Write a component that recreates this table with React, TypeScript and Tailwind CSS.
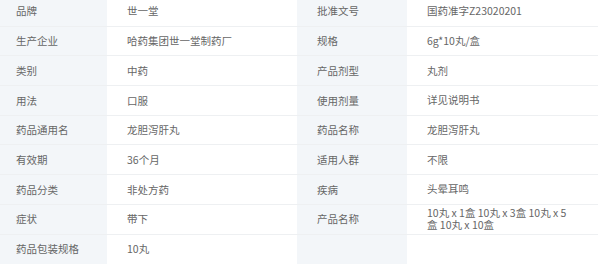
import React from "react";

const rows: [string, string, string, string][] = [
  ["品牌", "世一堂", "批准文号", "国药准字Z23020201"],
  ["生产企业", "哈药集团世一堂制药厂", "规格", "6g*10丸/盒"],
  ["类别", "中药", "产品剂型", "丸剂"],
  ["用法", "口服", "使用剂量", "详见说明书"],
  ["药品通用名", "龙胆泻肝丸", "药品名称", "龙胆泻肝丸"],
  ["有效期", "36个月", "适用人群", "不限"],
  ["药品分类", "非处方药", "疾病", "头晕耳鸣"],
  ["症状", "带下", "产品名称", "10丸 x 1盒 10丸 x 3盒 10丸 x 5盒 10丸 x 10盒"],
  ["药品包装规格", "10丸", "", ""],
];

export default function App() {
  return (
    <div className="w-[601px] h-[265px] overflow-hidden bg-white">
      <div
        className="ml-[-3px] mt-[-3px] w-[601px] grid grid-cols-[110px_190px_110px_191px] text-[10.5px] text-[#666]"
        style={{ fontFamily: '"Noto Sans CJK SC", "Noto Sans", sans-serif' }}
      >
        {rows.map((r, i) => {
          const last = i === rows.length - 1;
          const b = last ? "" : "border-b border-[#eef0f2]";
          return (
            <React.Fragment key={i}>
              <div className={`h-[29.7px] flex items-center pl-[19px] bg-[#f3f6f9] ${b}`}>{r[0]}</div>
              <div className={`h-[29.7px] flex items-center pl-[20px] pr-[10px] ${b}`}>{r[1]}</div>
              <div className={`h-[29.7px] flex items-center pl-[20px] bg-[#f3f6f9] ${b}`}>{r[2]}</div>
              <div className={`h-[29.7px] flex items-center pl-[20px] pr-[26px] leading-[12px] ${b}`}>{r[3]}</div>
            </React.Fragment>
          );
        })}
      </div>
    </div>
  );
}
